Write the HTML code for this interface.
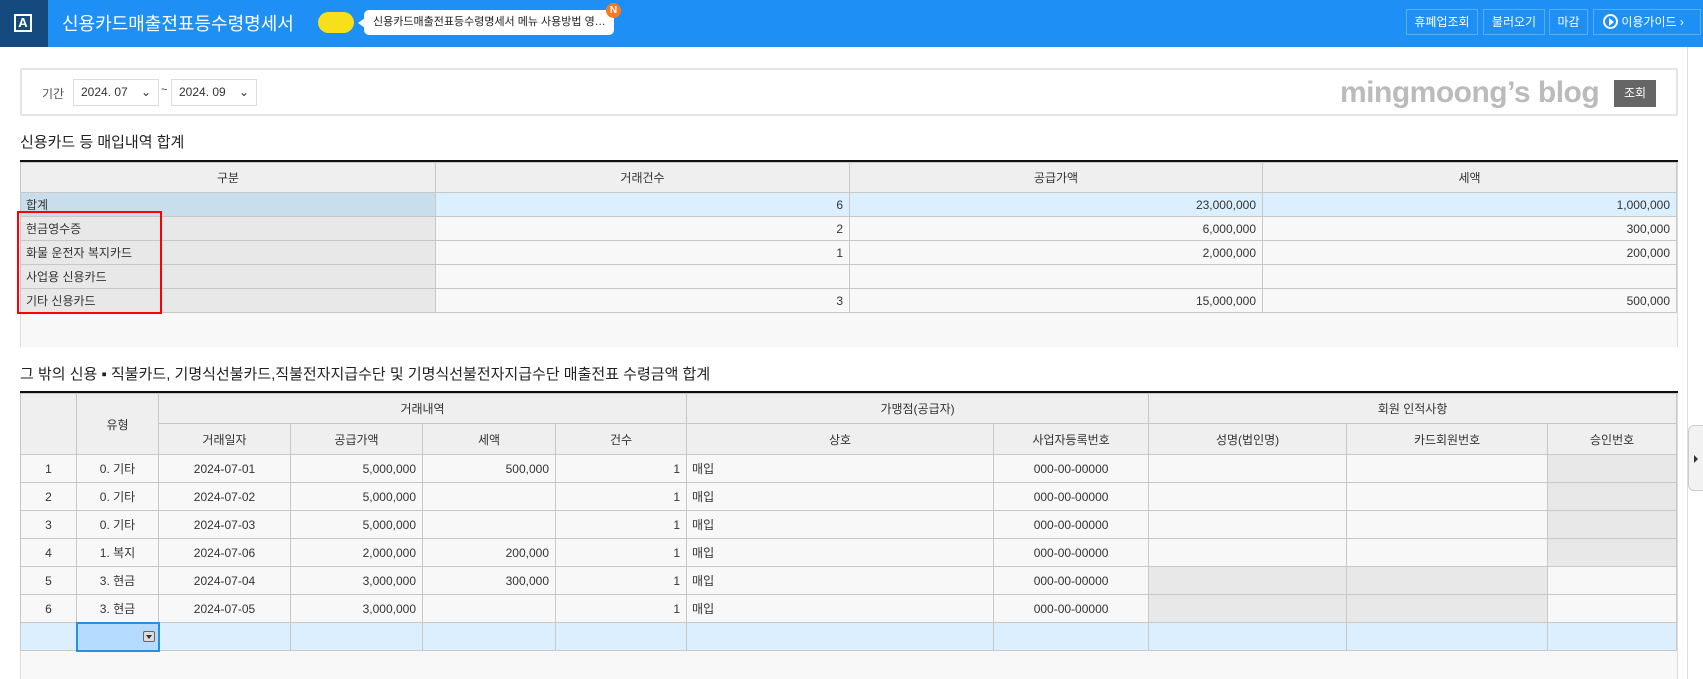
<!DOCTYPE html>
<html><head><meta charset="utf-8"><style>
*{box-sizing:border-box;margin:0;padding:0}
body{width:1703px;height:679px;overflow:hidden;background:#fff;font-family:"Liberation Sans","Noto Sans CJK KR",sans-serif;font-size:12px;color:#333;position:relative}
.a{position:absolute}
.hdr{left:0;top:0;width:1703px;height:47px;background:#1e90f5}
.logo{left:0;top:0;width:48px;height:47px;background:#144a7e}
.btn{top:9px;height:26px;border:1px solid #5aaef5;color:#fff;font-size:12px;line-height:24px;text-align:center}
table{border-collapse:collapse;position:absolute;table-layout:fixed}
td{border:1px solid #c8c8c8;font-size:12px;padding:0 6px;white-space:nowrap;overflow:hidden}
.h td{background:#efefef;text-align:center;color:#333}
.r{text-align:right}.c{text-align:center}
.g{background:#e8e8e8}
</style></head><body>
<div class="a hdr"></div>
<div class="a logo"><div class="a" style="left:14px;top:14px;width:18px;height:18px;border:2px solid #fff;color:#fff;font-size:13px;font-weight:bold;line-height:14px;text-align:center">A</div></div>
<div class="a" style="left:62px;top:11px;color:#fff;font-size:18px;line-height:26px">신용카드매출전표등수령명세서</div>
<div class="a" style="left:318px;top:12px;width:36px;height:21px;border-radius:11px;background:#f7e01a"></div>
<div class="a" style="left:364px;top:10px;width:250px;height:25px;border-radius:5px;background:#fff;font-size:11px;line-height:25px;padding-left:9px;color:#222">신용카드매출전표등수령명세서 메뉴 사용방법 영…</div>
<div class="a" style="left:358px;top:18px;width:0;height:0;border-top:5px solid transparent;border-bottom:5px solid transparent;border-right:7px solid #fff"></div>
<div class="a" style="left:606px;top:3px;width:15px;height:15px;border-radius:50%;background:#f47b20;color:#fff;font-size:10px;font-weight:bold;text-align:center;line-height:15px">N</div>
<div class="a btn" style="left:1406px;width:72px">휴폐업조회</div>
<div class="a btn" style="left:1483px;width:62px">불러오기</div>
<div class="a btn" style="left:1549px;width:39px">마감</div>
<div class="a btn" style="left:1593px;width:108px;text-align:left;padding-left:9px"><span style="display:inline-block;width:15px;height:15px;border:2px solid #fff;border-radius:50%;vertical-align:-3px;position:relative"><span style="position:absolute;left:4px;top:2px;border-top:4px solid transparent;border-bottom:4px solid transparent;border-left:5px solid #fff"></span></span> 이용가이드 ›</div>
<div class="a" style="left:1687px;top:47px;width:1px;height:632px;background:#ddd"></div>

<div class="a" style="left:20px;top:68px;width:1658px;height:48px;border:2px solid #e6e6e6"></div>
<div class="a" style="left:42px;top:85px;font-size:12px;color:#555">기간</div>
<div class="a" style="left:73px;top:79px;width:86px;height:27px;border:1px solid #ddd;font-size:12px;line-height:25px;padding-left:7px">2024. 07 <span style="margin-left:10px">⌄</span></div>
<div class="a" style="left:161px;top:84px;font-size:11px">~</div>
<div class="a" style="left:171px;top:79px;width:86px;height:27px;border:1px solid #ddd;font-size:12px;line-height:25px;padding-left:7px">2024. 09 <span style="margin-left:10px">⌄</span></div>
<div class="a" style="left:1340px;top:76px;font-size:30px;font-weight:bold;color:#bbb;letter-spacing:-0.5px">mingmoong’s blog</div>
<div class="a" style="left:1614px;top:80px;width:42px;height:27px;background:#666;color:#fff;text-align:center;line-height:27px;font-size:12px">조회</div>

<div class="a" style="left:20px;top:131px;font-size:15px;color:#222">신용카드 등 매입내역 합계</div>
<div class="a" style="left:20px;top:161px;width:1658px;height:186px;background:#f8f8f8;border-left:1px solid #ddd;border-right:1px solid #ddd"></div>
<div class="a" style="left:20px;top:160px;width:1658px;height:2px;background:#111"></div>
<table style="left:20px;top:162px;width:1656px">
<colgroup><col style="width:415px"><col style="width:414px"><col style="width:413px"><col style="width:414px"></colgroup>
<tr class="h" style="height:30px"><td>구분</td><td>거래건수</td><td>공급가액</td><td>세액</td></tr>
<tr style="height:24px"><td style="background:#c9deed;padding-left:5px">합계</td><td class="r" style="background:#dcefff">6</td><td class="r" style="background:#dcefff">23,000,000</td><td class="r" style="background:#dcefff">1,000,000</td></tr>
<tr style="height:24px"><td class="g" style="padding-left:5px">현금영수증</td><td class="r">2</td><td class="r">6,000,000</td><td class="r">300,000</td></tr>
<tr style="height:24px"><td class="g" style="padding-left:5px">화물 운전자 복지카드</td><td class="r">1</td><td class="r">2,000,000</td><td class="r">200,000</td></tr>
<tr style="height:24px"><td class="g" style="padding-left:5px">사업용 신용카드</td><td></td><td></td><td></td></tr>
<tr style="height:24px"><td class="g" style="padding-left:5px">기타 신용카드</td><td class="r">3</td><td class="r">15,000,000</td><td class="r">500,000</td></tr>
</table>
<div class="a" style="left:17px;top:211px;width:145px;height:103px;border:2px solid #f00"></div>

<div class="a" style="left:20px;top:363px;font-size:15px;color:#222">그 밖의 신용 ▪ 직불카드, 기명식선불카드,직불전자지급수단 및 기명식선불전자지급수단 매출전표 수령금액 합계</div>
<div class="a" style="left:20px;top:393px;width:1658px;height:286px;background:#f8f8f8;border-left:1px solid #ddd;border-right:1px solid #ddd"></div>
<div class="a" style="left:20px;top:391px;width:1658px;height:2px;background:#111"></div>
<table style="left:20px;top:393px;width:1656px">
<colgroup><col style="width:56px"><col style="width:82px"><col style="width:132px"><col style="width:132px"><col style="width:133px"><col style="width:131px"><col style="width:307px"><col style="width:155px"><col style="width:198px"><col style="width:201px"><col style="width:129px"></colgroup>
<tr class="h" style="height:30px"><td rowspan="2"></td><td rowspan="2">유형</td><td colspan="4">거래내역</td><td colspan="2">가맹점(공급자)</td><td colspan="3">회원 인적사항</td></tr>
<tr class="h" style="height:31px"><td>거래일자</td><td>공급가액</td><td>세액</td><td>건수</td><td>상호</td><td>사업자등록번호</td><td>성명(법인명)</td><td>카드회원번호</td><td>승인번호</td></tr>
<tr style="height:28px"><td class="c">1</td><td class="c">0. 기타</td><td class="c">2024-07-01</td><td class="r">5,000,000</td><td class="r">500,000</td><td class="r">1</td><td style="padding-left:5px">매입</td><td class="c">000-00-00000</td><td></td><td></td><td class="g"></td></tr>
<tr style="height:28px"><td class="c">2</td><td class="c">0. 기타</td><td class="c">2024-07-02</td><td class="r">5,000,000</td><td></td><td class="r">1</td><td style="padding-left:5px">매입</td><td class="c">000-00-00000</td><td></td><td></td><td class="g"></td></tr>
<tr style="height:28px"><td class="c">3</td><td class="c">0. 기타</td><td class="c">2024-07-03</td><td class="r">5,000,000</td><td></td><td class="r">1</td><td style="padding-left:5px">매입</td><td class="c">000-00-00000</td><td></td><td></td><td class="g"></td></tr>
<tr style="height:28px"><td class="c">4</td><td class="c">1. 복지</td><td class="c">2024-07-06</td><td class="r">2,000,000</td><td class="r">200,000</td><td class="r">1</td><td style="padding-left:5px">매입</td><td class="c">000-00-00000</td><td></td><td></td><td class="g"></td></tr>
<tr style="height:28px"><td class="c">5</td><td class="c">3. 현금</td><td class="c">2024-07-04</td><td class="r">3,000,000</td><td class="r">300,000</td><td class="r">1</td><td style="padding-left:5px">매입</td><td class="c">000-00-00000</td><td class="g"></td><td class="g"></td><td></td></tr>
<tr style="height:28px"><td class="c">6</td><td class="c">3. 현금</td><td class="c">2024-07-05</td><td class="r">3,000,000</td><td></td><td class="r">1</td><td style="padding-left:5px">매입</td><td class="c">000-00-00000</td><td class="g"></td><td class="g"></td><td></td></tr>
<tr style="height:28px;background:#dcefff"><td></td><td style="background:#b5dcff;border:2px solid #2a8ee0;position:relative"><span style="position:absolute;right:3px;top:7px;width:12px;height:11px;border:1px solid #666;border-radius:2px;background:#ddd"><span style="position:absolute;left:2px;top:3px;border-left:3px solid transparent;border-right:3px solid transparent;border-top:4px solid #333"></span></span></td><td></td><td></td><td></td><td></td><td></td><td></td><td></td><td></td><td></td></tr>
</table>
<div class="a" style="left:1688px;top:425px;width:15px;height:66px;background:#f2f2f2;border:1px solid #ccc;border-right:none;border-radius:6px 0 0 6px"><span style="position:absolute;left:5px;top:29px;border-top:4px solid transparent;border-bottom:4px solid transparent;border-left:4px solid #333"></span></div>
</body></html>
